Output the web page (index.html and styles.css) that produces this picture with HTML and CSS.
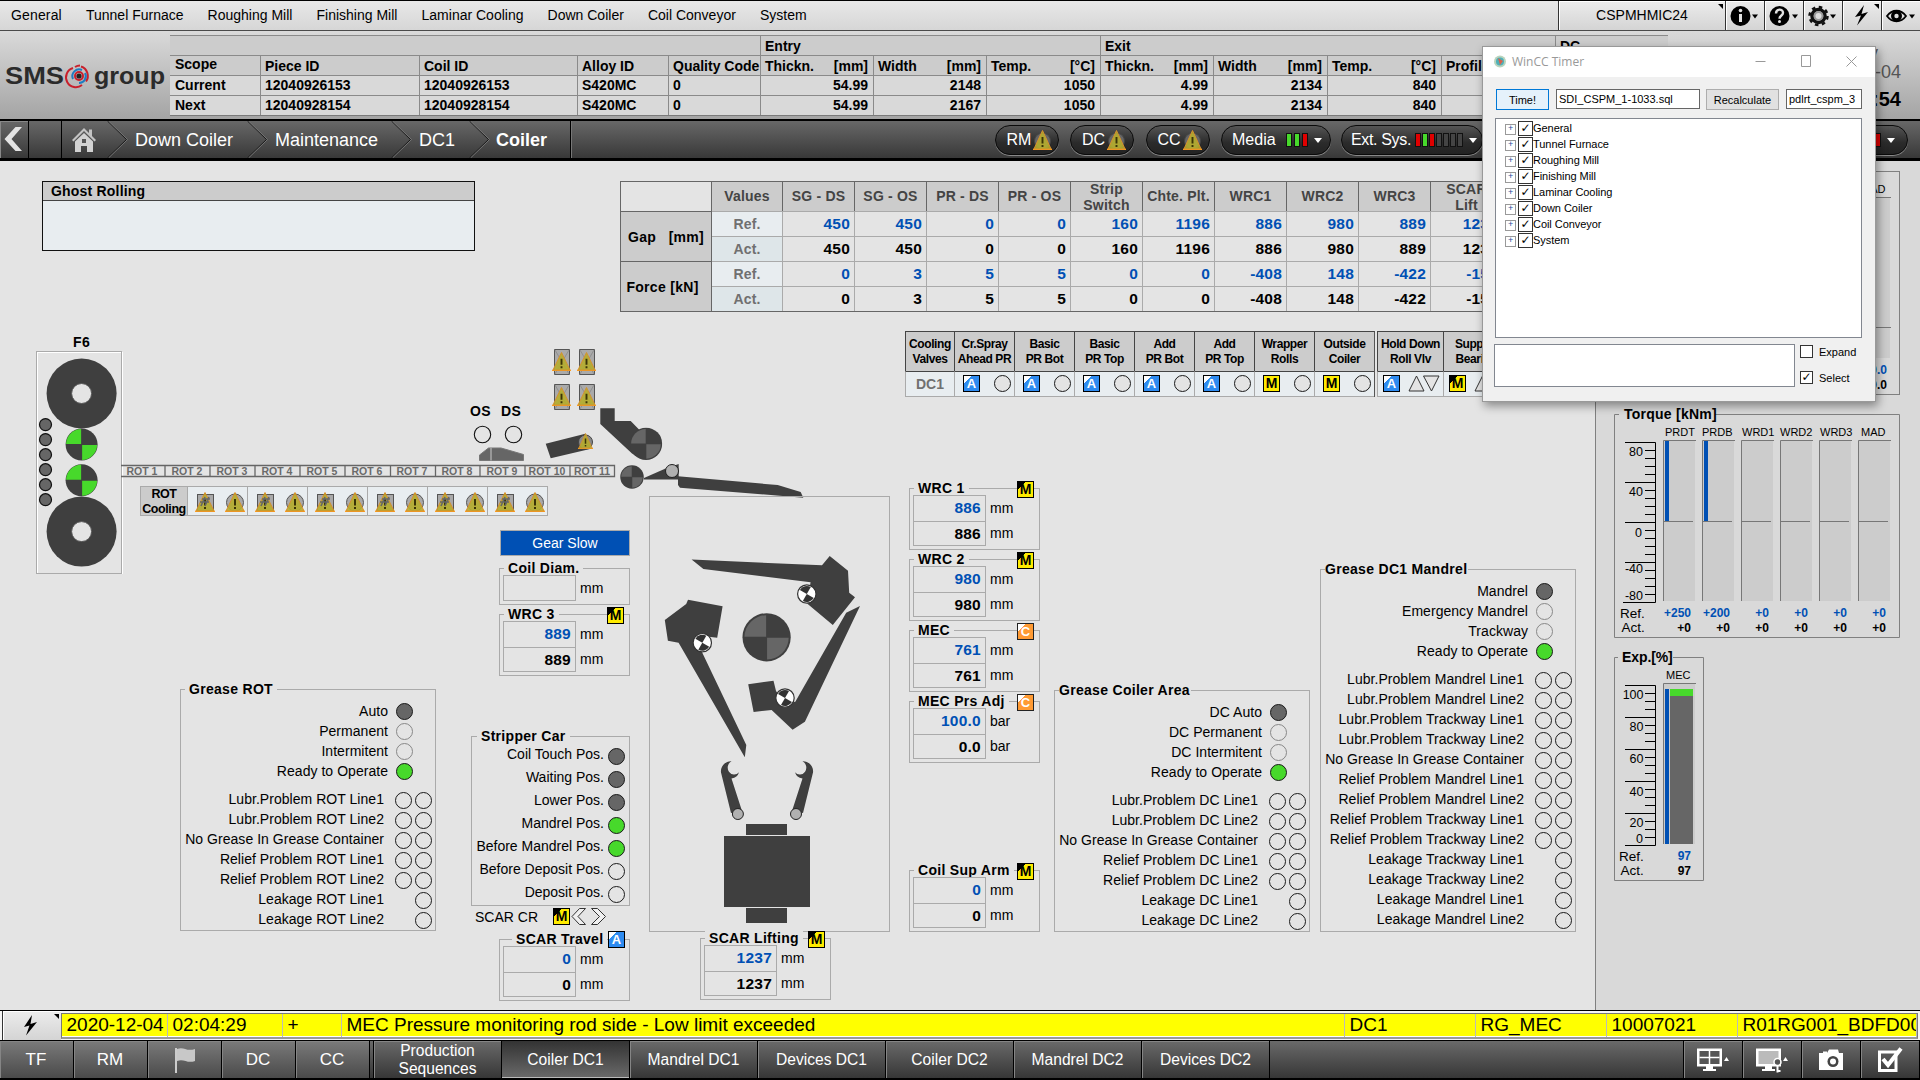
FILE: index.html
```html
<!DOCTYPE html>
<html lang="en">
<head>
<meta charset="utf-8">
<title>Coiler DC1</title>
<link rel="stylesheet" href="styles.css">
</head>
<body>
<svg class="defs" width="0" height="0">
  <symbol id="warn" viewBox="0 0 20 20" preserveAspectRatio="none">
    <path d="M0 19.5H20" stroke="#ff9d1e" stroke-width="1.6"/>
    <path d="M10 .5L19 19H1z" fill="#b5ad2c" fill-opacity=".9" stroke="#d8902c" stroke-width="1"/>
    <path d="M10 7v6.5M10 15v2" stroke="#3a3408" stroke-width="2"/>
  </symbol>
  <symbol id="pivot" viewBox="-10 -10 20 20">
    <circle r="9.2" fill="#fff" stroke="#333" stroke-width="1.2"/>
    <g transform="rotate(30)" fill="#333"><path d="M0 0V-8A8 8 0 0 0-8 0z"/><path d="M0 0V8A8 8 0 0 0 8 0z"/></g>
  </symbol>
  <symbol id="wheel" viewBox="-10 -10 20 20">
    <circle r="9.8" fill="#3f3f3f"/>
    <g fill="#666"><path d="M-.2-.2V-9A9 9 0 0 0-9-.2z"/><path d="M.2.2V9A9 9 0 0 0 9 .2z"/></g>
  </symbol>
  <symbol id="sq" viewBox="0 0 20 22">
    <rect x="2.5" y="4.500" width="16" height="16" fill="#a9a9a9" stroke="#555"/>
    <use href="#warn" x="0" y="2" width="20" height="20"/>
    <path d="M6 16l4-9M10 16l4-9M5 12h9M7 9h8" stroke="#666" stroke-width="1.6"/>
  </symbol>
  <symbol id="rd" viewBox="0 0 20 22">
    <circle cx="10" cy="12.500" r="8.500" fill="#a9a9a9" stroke="#555"/>
    <use href="#warn" x="0" y="2" width="20" height="20"/>
  </symbol>
</svg>

<nav class="menubar">
  <span>General</span><span>Tunnel Furnace</span><span>Roughing Mill</span><span>Finishing Mill</span><span>Laminar Cooling</span><span>Down Coiler</span><span>Coil Conveyor</span><span>System</span>
  <div class="menu-tools">
    <div class="tool station corner">CSPMHMIC24</div>
    <div class="tool"><svg width="38" height="28"><ellipse cx="14.500" cy="14" rx="10" ry="10"/><path d="M14.500 12v8" stroke="#e2e2e2" stroke-width="3"/><circle cx="14.500" cy="8.500" r="1.800" fill="#e2e2e2"/><path d="M26 12.500h6l-3 4z"/></svg></div>
    <div class="tool"><svg width="38" height="28"><circle cx="14.500" cy="14" r="10"/><path d="M11 11.500c0-5 7-5 7-.8 0 3-3.500 2.500-3.500 6" stroke="#e2e2e2" stroke-width="2.400" fill="none"/><circle cx="14.500" cy="19.500" r="1.500" fill="#e2e2e2"/><path d="M27 12.500h6l-3 4z"/></svg></div>
    <div class="tool"><svg width="38" height="28"><circle cx="14.500" cy="14" r="6.500" fill="none" stroke="#111" stroke-width="3.500"/><circle cx="14.500" cy="14" r="9" fill="none" stroke="#111" stroke-width="2.500" stroke-dasharray="3.500 3.570"/><circle cx="14.500" cy="14" r="5" fill="#999"/><circle cx="14.500" cy="14" r="3" fill="#ddd"/><path d="M26 12.500h6l-3 4z"/></svg></div>
    <div class="tool corner"><svg width="38" height="28"><path d="M21 3l-9 12 6-1.500-4 10L25 10l-6.500 2z"/></svg></div>
    <div class="tool"><svg width="38" height="28"><path d="M5 14c5-7 14-7 19 0c-5 7-14 7-19 0z" fill="none" stroke="#000" stroke-width="1.800"/><circle cx="14.500" cy="14" r="5.500"/><circle cx="14.500" cy="14" r="2.200" fill="#ddd"/><path d="M27 12.500h6l-3 4z"/></svg></div>
  </div>
</nav>

<header class="head">
  <svg class="logo" width="170" height="89" viewBox="0 31 170 89">
    <g fill="#2b2b2b"><text x="5" y="83.500" font-size="23" textLength="59" lengthAdjust="spacingAndGlyphs">SMS</text><text x="94" y="83.500" font-size="23" textLength="71" lengthAdjust="spacingAndGlyphs">group</text></g>
    <g fill="none" stroke-width="2">
      <path d="M73 68a9.800 9.800 0 1 0 9 17M81 66.500a9.800 9.800 0 0 1 5 15" stroke="#c8202c"/>
      <path d="M75 67a10 10 0 0 1 5-1.500" stroke="#c8202c"/>
      <path d="M73 79a6.800 6.800 0 0 1 9-9M85 73a6.800 6.800 0 0 1-6 10" stroke="#1f7cc0"/>
      <circle cx="79" cy="76" r="4" stroke="#c8202c"/>
    </g><circle cx="79" cy="76" r="2.600" fill="#222"/>
  </svg>
  <table class="strip">
    <colgroup><col style="width:90px"><col style="width:159px"><col style="width:158px"><col style="width:91px"><col style="width:92px"><col style="width:113px"><col style="width:113px"><col style="width:114px"><col style="width:113px"><col style="width:114px"><col style="width:114px"><col style="width:114px"><col style="width:113px"></colgroup>
    <tr class="top"><th colspan="5"></th><th colspan="3">Entry</th><th colspan="4">Exit</th><th>DC</th></tr>
    <tr class="hd"><th class="sc">Scope</th><th>Piece ID</th><th>Coil ID</th><th>Alloy ID</th><th>Quality Code</th><th><div>Thickn.<span>[mm]</span></div></th><th><div>Width<span>[mm]</span></div></th><th><div>Temp.<span>[°C]</span></div></th><th><div>Thickn.<span>[mm]</span></div></th><th><div>Width<span>[mm]</span></div></th><th><div>Temp.<span>[°C]</span></div></th><th>Profile</th><th></th></tr>
    <tr><td>Current</td><td>12040926153</td><td>12040926153</td><td>S420MC</td><td>0</td><td class="n">54.99</td><td class="n">2148</td><td class="n">1050</td><td class="n">4.99</td><td class="n">2134</td><td class="n">840</td><td></td><td></td></tr>
    <tr><td>Next</td><td>12040928154</td><td>12040928154</td><td>S420MC</td><td>0</td><td class="n">54.99</td><td class="n">2167</td><td class="n">1050</td><td class="n">4.99</td><td class="n">2134</td><td class="n">840</td><td></td><td></td></tr>
  </table>
  <div class="clock"><div class="day">Friday</div><div class="date">2020-12-04</div><div class="time">02:04:54</div></div>
</header>

<nav class="crumbs">
  <div class="back"><svg width="28" height="37"><path d="M22 6L15.500 6L4.500 18L15.500 30H22L11.500 18z" fill="#e4e4e4"/></svg></div>
  <div class="blank"></div>
  <div class="home"><svg width="26" height="26" viewBox="0 0 26 26"><path d="M1 13L13 1l5 5V2.500h3V9l4 4-1.500 1.500L13 4 2.500 14.500z" fill="#c4c4c4"/><path d="M4 14.500L13 6l9 8.500V25h-6v-6h-6v6H4z" fill="#d2d2d2"/><path d="M11 12h4v4h-4z" fill="#555"/></svg></div>
  <svg class="chev" width="21" height="37"><path d="M.5 0L19.500 18.500L.5 37" /><path class="hi" d="M1.500 0L20.500 18.500L1.500 37"/></svg>
  <span style="width:119px">Down Coiler</span>
  <svg class="chev" width="21" height="37"><path d="M.5 0L19.500 18.500L.5 37" /><path class="hi" d="M1.500 0L20.500 18.500L1.500 37"/></svg>
  <span style="width:123px">Maintenance</span>
  <svg class="chev" width="21" height="37"><path d="M.5 0L19.500 18.500L.5 37" /><path class="hi" d="M1.500 0L20.500 18.500L1.500 37"/></svg>
  <span style="width:57px">DC1</span>
  <svg class="chev" width="21" height="37"><path d="M.5 0L19.500 18.500L.5 37" /><path class="hi" d="M1.500 0L20.500 18.500L1.500 37"/></svg>
  <b>Coiler</b>
  <div class="pills">
    <div class="pill area">RM<svg width="19" height="20"><circle cx="9.500" cy="11" r="8" fill="#666" stroke="#444"/><use href="#warn" width="19" height="20"/></svg></div>
    <div class="pill area">DC<svg width="19" height="20"><circle cx="9.500" cy="11" r="8" fill="#666" stroke="#444"/><use href="#warn" width="19" height="20"/></svg></div>
    <div class="pill area">CC<svg width="19" height="20"><circle cx="9.500" cy="11" r="8" fill="#666" stroke="#444"/><use href="#warn" width="19" height="20"/></svg></div>
    <div class="pill media">Media<div class="bars wide"><i class="g"></i><i class="g"></i><i class="r"></i></div><em></em></div>
    <div class="pill ext">Ext. Sys.<div class="bars"><i class="r"></i><i class="g"></i><i class="r"></i><i></i><i></i><i></i><i></i></div><em></em></div>
    <div class="pill last"><div class="bars wide"><i class="r"></i><i class="r"></i></div><em></em></div>
  </div>
</nav>

<main class="main">
  <section class="process">
    <svg class="mimic" width="1595" height="849" viewBox="0 161 1595 849">
      <rect x="36.500" y="352.500" width="85" height="221" fill="none" stroke="#fff" transform="translate(1 0)"/>
      <rect x="36.500" y="351.500" width="85" height="222" fill="none" stroke="#aaa"/>
      <text x="73" y="347" class="lb">F6</text>
      <g fill="#3f3f3f"><circle cx="81.600" cy="393.500" r="35"/><circle cx="81.600" cy="531.600" r="35"/></g>
      <g fill="#e4e4e4" stroke="#555"><circle cx="81.600" cy="393.500" r="10"/><circle cx="81.600" cy="531.600" r="10"/></g>
      <g id="drv" transform="translate(81.600 444.500)"><circle r="16" fill="#3f3f3f"/><g fill="#47d92b"><path d="M-.5-.5V-15.500A15.500 15.500 0 0 0-15.500-.5z"/><path d="M.5.5V15.500A15.500 15.500 0 0 0 15.500.5z"/></g></g>
      <use href="#drv" y="35.800"/>
      <g fill="#666" stroke="#111" stroke-width="1.200"><circle cx="45.500" cy="424.600" r="6"/><circle cx="45.500" cy="439.600" r="6"/><circle cx="45.500" cy="454.700" r="6"/><circle cx="45.500" cy="469.700" r="6"/><circle cx="45.500" cy="484.700" r="6"/><circle cx="45.500" cy="499.700" r="6"/></g>
      <path d="M121 465.500H614.500V476.500H121M165 465v12M210 465v12M255 465v12M300 465v12M345 465v12M390.500 465v12M435.500 465v12M480 465v12M525 465v12M570 465v12" fill="none" stroke="#666" stroke-width="1.300"/>
      <g class="rot"><text x="142" y="475">ROT 1</text><text x="187" y="475">ROT 2</text><text x="232" y="475">ROT 3</text><text x="277" y="475">ROT 4</text><text x="322" y="475">ROT 5</text><text x="367" y="475">ROT 6</text><text x="412" y="475">ROT 7</text><text x="457" y="475">ROT 8</text><text x="502" y="475">ROT 9</text><text x="547" y="475">ROT 10</text><text x="592" y="475">ROT 11</text></g>
      <text x="470" y="416" class="lb">OS</text><text x="501" y="416" class="lb">DS</text>
      <g fill="none" stroke="#111" stroke-width="1.100"><circle cx="482.500" cy="434.500" r="8.200"/><circle cx="513.500" cy="434.500" r="8.200"/></g>
      <path d="M479.500 460.500V455L488.500 448H501L523.500 454.500V460.500z" fill="#666" stroke="#777"/><path d="M491 448v12.500" stroke="#aaa" stroke-width="1.500"/>
      <g fill="#aaa" stroke="#555"><path d="M554.500 349.500h15v25h-15zM579.500 349.500h15v25h-15zM554.500 384.500h15v25h-15zM579.500 384.500h15v25h-15z"/></g>
      <path d="M555 350l14 24m0-24l-14 24M580 350l14 24m0-24l-14 24M555 385l14 24m0-24l-14 24M580 385l14 24m0-24l-14 24" stroke="#888" fill="none" stroke-width=".8"/>
      <use href="#warn" x="552" y="352" width="19" height="19"/><use href="#warn" x="577" y="352" width="19" height="19"/><use href="#warn" x="552" y="387" width="19" height="19"/><use href="#warn" x="577" y="387" width="19" height="19"/>
      <g fill="#3f3f3f">
        <path d="M545.700 443.700L585.300 433.700L590 449L550.700 458.300z"/>
        <path d="M600.300 408.300H614.700V421H630.700L640 430.500L648 445L636 456L632 453.500L600.300 424z"/>
        <path d="M644 478L665 468.700L678.700 464V479.500H644z"/>
        <path d="M678 476.300L777.700 485L800.700 492L803.300 497.700L680 487.700L678 485z"/>
      </g>
      <circle cx="585.500" cy="442" r="7" fill="#888" stroke="#444"/><use href="#warn" x="578" y="433" width="15" height="16"/>
      <use href="#wheel" x="629.500" y="427.300" width="33" height="33"/>
      <use href="#wheel" x="620" y="465" width="24" height="24"/>
      <circle cx="672" cy="471" r="6.500" fill="#b0b0b0" stroke="#222"/>
      <rect x="649.500" y="496.500" width="240" height="435" fill="none" stroke="#aaa"/>
      <g fill="#3f3f3f">
        <path d="M691.600 559.500L822 565.300L829.700 556L848 570.700L849.200 592.700L855 597.300L832.800 625L806.800 603.300L810.600 582.300L703.400 569z"/>
        <path d="M688 599.700L722.600 606.300L717.200 637.700L702.300 636V652.700L746.300 745L744.800 757.300L678.600 642.700L667.900 640.700L664.800 620L686.200 604z"/>
        <path d="M860 606L846.200 612.700L795.300 701.700L785 704L776 691L773.500 680.700L748.200 684.300L753.600 712L771.600 710L792.600 729.700L804.900 721.700z"/>
        <g id="hook"><path d="M731.500 761.200A10 10 0 0 0 721 772.500L731 813L742 811L731.500 778.500Q737.500 777.500 739 772.300A6.500 7 0 1 1 731.500 761.200z"/></g>
        <use href="#hook" transform="translate(1534 0) scale(-1 1)"/>
        <path d="M746 824h41v11h-41zM724 836h86v71h-86zM746 908h41v15h-41z"/>
      </g>
      <g fill="#b0b0b0" stroke="#222"><circle cx="737.900" cy="814" r="5.500"/><circle cx="796" cy="814" r="5.500"/></g>
      <use href="#pivot" x="796.800" y="584" width="20" height="20"/><use href="#pivot" x="692.300" y="632.700" width="20" height="20"/><use href="#pivot" x="775" y="688" width="20" height="20"/>
      <use href="#wheel" x="742" y="612.700" width="49.200" height="49.200"/>
    </svg>

    <div class="toprow">
      <div class="ghost"><h3>Ghost Rolling</h3></div>
      <table class="values">
        <tr class="vh"><th class="none"></th><th class="v">Values</th><th>SG - DS</th><th>SG - OS</th><th>PR - DS</th><th>PR - OS</th><th><div>Strip<br>Switch</div></th><th>Chte. Plt.</th><th>WRC1</th><th>WRC2</th><th>WRC3</th><th><div>SCAR<br>Lift</div></th><th></th><th></th></tr>
        <tr class="ref"><th rowspan="2" class="rh">Gap &nbsp;&nbsp;[mm]</th><td class="k">Ref.</td><td>450</td><td>450</td><td>0</td><td>0</td><td>160</td><td>1196</td><td>886</td><td>980</td><td>889</td><td>1237</td><td></td><td></td></tr>
        <tr><td class="k">Act.</td><td>450</td><td>450</td><td>0</td><td>0</td><td>160</td><td>1196</td><td>886</td><td>980</td><td>889</td><td>1237</td><td></td><td></td></tr>
        <tr class="ref"><th rowspan="2" class="rh f2">Force [kN]</th><td class="k">Ref.</td><td>0</td><td>3</td><td>5</td><td>5</td><td>0</td><td>0</td><td>-408</td><td>148</td><td>-422</td><td>-159</td><td></td><td></td></tr>
        <tr class="lastrow"><td class="k">Act.</td><td>0</td><td>3</td><td>5</td><td>5</td><td>0</td><td>0</td><td>-408</td><td>148</td><td>-422</td><td>-159</td><td></td><td></td></tr>
      </table>
    </div>

    <div class="valves">
      <div class="vc first"><b>Cooling<br>Valves</b><div>DC1</div></div>
      <div class="vc"><b>Cr.Spray<br>Ahead PR</b><div><i class="bd a">A</i><i class="lamp lf"></i></div></div>
      <div class="vc"><b>Basic<br>PR Bot</b><div><i class="bd a">A</i><i class="lamp lf"></i></div></div>
      <div class="vc"><b>Basic<br>PR Top</b><div><i class="bd a">A</i><i class="lamp lf"></i></div></div>
      <div class="vc"><b>Add<br>PR Bot</b><div><i class="bd a">A</i><i class="lamp lf"></i></div></div>
      <div class="vc"><b>Add<br>PR Top</b><div><i class="bd a">A</i><i class="lamp lf"></i></div></div>
      <div class="vc"><b>Wrapper<br>Rolls</b><div><i class="bd m plain">M</i><i class="lamp lf"></i></div></div>
      <div class="vc end"><b>Outside<br>Coiler</b><div><i class="bd m plain">M</i><i class="lamp lf"></i></div></div>
      <div class="vc tri"><b>Hold Down<br>Roll Vlv</b><div><i class="bd a">A</i><svg width="32" height="17"><path d="M1 16L8.500 1L16 16zM15.500 1H31L23.500 16z" fill="#e4e4e4" stroke="#333"/></svg></div></div>
      <div class="vc tri"><b>Support<br>Bearing</b><div><i class="bd m">M</i><svg width="32" height="17"><path d="M1 16L8.500 1L16 16zM15.500 1H31L23.500 16z" fill="#e4e4e4" stroke="#333"/></svg></div></div>
    </div>

    <div class="board">
      <div class="c1">
        <div class="rotcool"><b>ROT<br>Cooling</b>
          <div><svg width="20" height="22"><use href="#sq"/></svg><svg width="20" height="22"><use href="#rd"/></svg></div>
          <div><svg width="20" height="22"><use href="#sq"/></svg><svg width="20" height="22"><use href="#rd"/></svg></div>
          <div><svg width="20" height="22"><use href="#sq"/></svg><svg width="20" height="22"><use href="#rd"/></svg></div>
          <div><svg width="20" height="22"><use href="#sq"/></svg><svg width="20" height="22"><use href="#rd"/></svg></div>
          <div><svg width="20" height="22"><use href="#sq"/></svg><svg width="20" height="22"><use href="#rd"/></svg></div>
          <div><svg width="20" height="22"><use href="#sq"/></svg><svg width="20" height="22"><use href="#rd"/></svg></div>
        </div>
        <div class="box grease g-rot"><h4>Grease ROT</h4>
          <ul class="st"><li>Auto<i class="lamp dk"></i></li><li>Permanent<i class="lamp off"></i></li><li>Intermitent<i class="lamp off"></i></li><li>Ready to Operate<i class="lamp gn"></i></li></ul>
          <ul class="pb"><li>Lubr.Problem ROT Line1<i class="lamp"></i><i class="lamp"></i></li><li>Lubr.Problem ROT Line2<i class="lamp"></i><i class="lamp"></i></li><li>No Grease In Grease Container<i class="lamp"></i><i class="lamp"></i></li><li>Relief Problem ROT Line1<i class="lamp"></i><i class="lamp"></i></li><li>Relief Problem ROT Line2<i class="lamp"></i><i class="lamp"></i></li><li>Leakage ROT Line1<i class="lamp one"></i></li><li>Leakage ROT Line2<i class="lamp one"></i></li></ul>
        </div>
      </div>
      <div class="c2">
        <div class="gear">Gear Slow</div>
        <div class="box val single"><h4>Coil Diam.</h4><div class="vr"><div class="f"><p></p></div><div class="u"><p>mm</p></div></div></div>
        <div class="box val"><h4>WRC 3</h4><i class="bd m">M</i><div class="vr"><div class="f"><p class="bl">889</p><p>889</p></div><div class="u"><p>mm</p><p>mm</p></div></div></div>
        <div class="box stripper"><h4>Stripper Car</h4>
          <ul><li>Coil Touch Pos.<i class="lamp dk"></i></li><li>Waiting Pos.<i class="lamp dk"></i></li><li>Lower Pos.<i class="lamp dk"></i></li><li>Mandrel Pos.<i class="lamp gn"></i></li><li>Before Mandrel Pos.<i class="lamp gn"></i></li><li>Before Deposit Pos.<i class="lamp"></i></li><li>Deposit Pos.<i class="lamp"></i></li></ul>
        </div>
        <div class="scarcr"><span>SCAR CR</span><i class="bd m">M</i><svg width="38" height="17"><path d="M9.500.5h6L8 8.500l7.500 8h-6L2 8.500zM21.500.5h6l8 8-8 8h-6l8-8z" fill="#f0f0f0" stroke="#333"/></svg></div>
        <div class="box val travel"><h4>SCAR Travel</h4><i class="bd a">A</i><div class="vr"><div class="f"><p class="bl">0</p><p>0</p></div><div class="u"><p>mm</p><p>mm</p></div></div></div>
      </div>
      <div class="c3">
        <div class="box val"><h4>SCAR Lifting</h4><i class="bd m">M</i><div class="vr"><div class="f"><p class="bl">1237</p><p>1237</p></div><div class="u"><p>mm</p><p>mm</p></div></div></div>
      </div>
      <div class="c4">
        <div class="box val"><h4>WRC 1</h4><i class="bd m">M</i><div class="vr"><div class="f"><p class="bl">886</p><p>886</p></div><div class="u"><p>mm</p><p>mm</p></div></div></div>
        <div class="box val"><h4>WRC 2</h4><i class="bd m">M</i><div class="vr"><div class="f"><p class="bl">980</p><p>980</p></div><div class="u"><p>mm</p><p>mm</p></div></div></div>
        <div class="box val"><h4>MEC</h4><i class="bd c">C</i><div class="vr"><div class="f"><p class="bl">761</p><p>761</p></div><div class="u"><p>mm</p><p>mm</p></div></div></div>
        <div class="box val"><h4>MEC Prs Adj</h4><i class="bd c">C</i><div class="vr"><div class="f"><p class="bl">100.0</p><p>0.0</p></div><div class="u"><p>bar</p><p>bar</p></div></div></div>
        <div class="box val arm"><h4>Coil Sup Arm</h4><i class="bd m">M</i><div class="vr"><div class="f"><p class="bl">0</p><p>0</p></div><div class="u"><p>mm</p><p>mm</p></div></div></div>
      </div>
      <div class="c5">
        <div class="box grease"><h4>Grease Coiler Area</h4>
          <ul class="st"><li>DC Auto<i class="lamp dk"></i></li><li>DC Permanent<i class="lamp off"></i></li><li>DC Intermitent<i class="lamp off"></i></li><li>Ready to Operate<i class="lamp gn"></i></li></ul>
          <ul class="pb"><li>Lubr.Problem DC Line1<i class="lamp"></i><i class="lamp"></i></li><li>Lubr.Problem DC Line2<i class="lamp"></i><i class="lamp"></i></li><li>No Grease In Grease Container<i class="lamp"></i><i class="lamp"></i></li><li>Relief Problem DC Line1<i class="lamp"></i><i class="lamp"></i></li><li>Relief Problem DC Line2<i class="lamp"></i><i class="lamp"></i></li><li>Leakage DC Line1<i class="lamp one"></i></li><li>Leakage DC Line2<i class="lamp one"></i></li></ul>
        </div>
      </div>
      <div class="c6">
        <div class="box grease tall"><h4>Grease DC1 Mandrel</h4>
          <ul class="st"><li>Mandrel<i class="lamp dk"></i></li><li>Emergency Mandrel<i class="lamp off"></i></li><li>Trackway<i class="lamp off"></i></li><li>Ready to Operate<i class="lamp gn"></i></li></ul>
          <ul class="pb"><li>Lubr.Problem Mandrel Line1<i class="lamp"></i><i class="lamp"></i></li><li>Lubr.Problem Mandrel Line2<i class="lamp"></i><i class="lamp"></i></li><li>Lubr.Problem Trackway Line1<i class="lamp"></i><i class="lamp"></i></li><li>Lubr.Problem Trackway Line2<i class="lamp"></i><i class="lamp"></i></li><li>No Grease In Grease Container<i class="lamp"></i><i class="lamp"></i></li><li>Relief Problem Mandrel Line1<i class="lamp"></i><i class="lamp"></i></li><li>Relief Problem Mandrel Line2<i class="lamp"></i><i class="lamp"></i></li><li>Relief Problem Trackway Line1<i class="lamp"></i><i class="lamp"></i></li><li>Relief Problem Trackway Line2<i class="lamp"></i><i class="lamp"></i></li><li>Leakage Trackway Line1<i class="lamp one"></i></li><li>Leakage Trackway Line2<i class="lamp one"></i></li><li>Leakage Mandrel Line1<i class="lamp one"></i></li><li>Leakage Mandrel Line2<i class="lamp one"></i></li></ul>
        </div>
      </div>
    </div>
  </section>

  <aside class="side">
    <svg class="chart" width="287" height="224" viewBox="0 0 287 224">
      <rect x=".5" y=".5" width="285" height="223" fill="none" stroke="#808080"/>
      <text x="247" y="22" class="cl">MAD</text><path d="M244 26h32v161h-32z" fill="#ccc"/><path d="M244.500 187V26.500H277M244 156.500h33" fill="none" stroke="#777"/>
      <text x="273" y="203" class="cv bl">0.0</text><text x="273" y="218" class="cv">0.0</text>
    </svg>
    <svg class="chart" width="287" height="232" viewBox="0 0 287 232">
      <path d="M5 8.500H.5V231.500H285.500V8.500H101" fill="none" stroke="#808080"/>
      <text x="10" y="13" class="ct">Torque [kNm]</text>
      <g class="cl"><text x="51" y="30">PRDT</text><text x="88" y="30">PRDB</text><text x="128" y="30">WRD1</text><text x="166" y="30">WRD2</text><text x="206" y="30">WRD3</text><text x="247" y="30">MAD</text></g>
      <path d="M49 35h32v160H49zM88 35h32v160H88zM127 35h32v160h-32zM166 35h32v160h-32zM205 35h32v160h-32zM244 35h32v160h-32z" fill="#ccc"/>
      <path d="M49.500 195V34.500H82M88.500 195V34.500H121M127.500 195V34.500H160M166.500 195V34.500H199M205.500 195V34.500H238M244.500 195V34.500H277M50 115.500h29M89 115.500h29M128 115.500h29M167 115.500h29M206 115.500h29M245 115.500h29" fill="none" stroke="#777"/>
      <path d="M51 35h4v80h-4zM90 35h4v80h-4z" fill="#0050b4"/>
      <path d="M11 36.500H41.500V196.500H9M11 76.500H41M11 116.500H41M11 156.500H41M31 44.500h10M31 52.500h10M31 60.500h10M31 68.500h10M31 84.500h10M31 92.500h10M31 100.500h10M31 108.500h10M31 124.500h10M31 132.500h10M31 140.500h10M31 148.500h10M31 164.500h10M31 172.500h10M31 180.500h10M31 188.500h10" fill="none" stroke="#000"/>
      <g class="ax"><text x="29" y="50">80</text><text x="29" y="90">40</text><text x="28" y="131">0</text><text x="29" y="167">-40</text><text x="29" y="194">-80</text></g>
      <g class="cr"><text x="6" y="212">Ref.</text><text x="7.500" y="226">Act.</text></g>
      <g class="cv bl"><text x="77" y="211">+250</text><text x="116" y="211">+200</text><text x="155" y="211">+0</text><text x="194" y="211">+0</text><text x="233" y="211">+0</text><text x="272" y="211">+0</text></g>
      <g class="cv"><text x="77" y="226">+0</text><text x="116" y="226">+0</text><text x="155" y="226">+0</text><text x="194" y="226">+0</text><text x="233" y="226">+0</text><text x="272" y="226">+0</text></g>
    </svg>
    <svg class="chart exp" width="91" height="232" viewBox="0 0 91 232">
      <path d="M4 8.500H.5V231.500H89.500V8.500H59" fill="none" stroke="#808080"/>
      <text x="8" y="13" class="ct" textLength="51">Exp.[%]</text>
      <text x="52" y="30" class="cl">MEC</text>
      <path d="M49 35h32v160H49z" fill="#ccc"/><path d="M49.500 195V34.500H82" fill="none" stroke="#777"/>
      <path d="M51 40h4v155h-4z" fill="#0050b4"/><path d="M56 40h23v7H56z" fill="#47d92b"/><path d="M56 47h23v148H56z" fill="#666"/>
      <path d="M11 36.500H41.500V196.500H11M11 68.500H41M11 100.500H41M11 132.500H41M11 164.500H41M31 44.500h10M31 52.500h10M31 60.500h10M31 76.500h10M31 84.500h10M31 92.500h10M31 108.500h10M31 116.500h10M31 124.500h10M31 140.500h10M31 148.500h10M31 156.500h10M31 172.500h10M31 180.500h10M31 188.500h10" fill="none" stroke="#000"/>
      <g class="ax"><text x="29.500" y="50">100</text><text x="29.500" y="82">80</text><text x="29.500" y="114">60</text><text x="29.500" y="147">40</text><text x="29.500" y="178">20</text><text x="29" y="194">0</text></g>
      <g class="cr"><text x="5" y="212">Ref.</text><text x="6.500" y="226">Act.</text></g>
      <text x="77" y="211" class="cv bl">97</text><text x="77" y="226" class="cv">97</text>
    </svg>
  </aside>
</main>

<section class="alarm">
  <div class="tool corner"><svg width="58" height="28"><path d="M30 3l-8 12 5.500-1.500-3.500 10L35 10l-6.500 2z"/></svg></div>
  <div class="alarmrow"><span style="width:106px">2020-12-04</span><span style="width:115px">02:04:29</span><span style="width:59px">+</span><span style="width:1003px">MEC Pressure monitoring rod side - Low limit exceeded</span><span style="width:131px">DC1</span><span style="width:131px">RG_MEC</span><span style="width:131px">10007021</span><span class="fill">R01RG001_BDFD001</span></div>
</section>

<footer class="tabs">
  <div class="t a">TF</div><div class="t a">RM</div><div class="t a"><svg width="24" height="28"><path d="M4 2v25" stroke="#ccc" stroke-width="2"/><path d="M5 3c7-3 9 3 18 0v12c-8 3-11-3-18 0z" fill="#c8c8c8"/></svg></div><div class="t a">DC</div><div class="t a">CC</div>
  <div class="gapcell"></div>
  <div class="t p two">Production Sequences</div><div class="t p on">Coiler DC1</div><div class="t p">Mandrel DC1</div><div class="t p">Devices DC1</div><div class="t p">Coiler DC2</div><div class="t p">Mandrel DC2</div><div class="t p">Devices DC2</div>
  <div class="grow"></div>
  <div class="t i"><svg width="34" height="26"><path d="M1 1.500h25v18H1z" fill="#fff"/><path d="M3.500 4h20v13h-20z" fill="#555"/><path d="M3.500 10.500h20M13.500 4v13" stroke="#fff" stroke-width="1.500"/><path d="M10 19h7v3h3v2H7v-2h3z" fill="#fff"/><path d="M28 14h5l-2.500-4z" fill="#fff"/></svg></div>
  <div class="t i"><svg width="34" height="26"><path d="M1 1.500h25v18H1z" fill="#fff"/><path d="M3.500 4h20v13h-20z" fill="#bbb"/><path d="M10 19h7v3h3v2H7v-2h3z" fill="#fff"/><circle cx="22.500" cy="15" r="3.500" fill="#555" stroke="#fff" stroke-width="1.500"/><path d="M22.500 18.500v7M22.500 24h3" stroke="#fff" stroke-width="2"/><path d="M28 14h5l-2.500-4z" fill="#fff"/></svg></div>
  <div class="t i"><svg width="26" height="22"><path d="M1 4h4V2.500h4V4l2-3.500h9L21 4h4v17H1z" fill="#fff"/><circle cx="15" cy="12.500" r="5.500" fill="#444"/><circle cx="15" cy="12.500" r="3" fill="#fff"/></svg></div>
  <div class="t i"><svg width="26" height="26"><path d="M2.500 5h16.500v18.500H2.500z" fill="none" stroke="#fff" stroke-width="3"/><path d="M6 12l5 6L24 1.500" fill="none" stroke="#fff" stroke-width="4"/></svg></div>
</footer>

<div class="win">
  <div class="wtitle"><svg width="14" height="14"><circle cx="7" cy="7.500" r="6" fill="#b9d4bd"/><circle cx="7" cy="7.500" r="4" fill="#4fb0b8"/><path d="M5 4l5 3-3 4z" fill="#d9624d"/></svg><span>WinCC Timer</span>
    <svg class="wbtn" width="110" height="14"><path d="M.5 7.500h10M46.500 1.500h9v11h-9zM91.500 2.500l10 10M101.500 2.500l-10 10" fill="none" stroke="#999"/></svg></div>
  <div class="wrow"><div class="btn pri">Time!</div><div class="inp w1">SDI_CSPM_1-1033.sql</div><div class="btn">Recalculate</div><div class="inp w2">pdlrt_cspm_3</div></div>
  <ul class="tree"><li>General</li><li>Tunnel Furnace</li><li>Roughing Mill</li><li>Finishing Mill</li><li>Laminar Cooling</li><li>Down Coiler</li><li>Coil Conveyor</li><li>System</li></ul>
  <div class="wfoot"><div class="memo"></div><div class="opts"><div><i class="ck"></i>Expand</div><div><i class="ck on"></i>Select</div></div></div>
</div>
</body>
</html>
```
FILE: styles.css
```css
*{box-sizing:border-box}
body{margin:0;width:1920px;height:1080px;overflow:hidden;position:relative;background:#e4e4e4;font:14px "Liberation Sans",Arial,sans-serif;color:#000}
h3,h4,p,ul{margin:0;padding:0;font-size:inherit}
ul{list-style:none}
i,em{font-style:normal}
svg{display:block;flex:none}
.defs{position:absolute}
.bl{color:#0050b4}

/* menu bar */
.menubar{height:31px;border-top:1px solid #000;border-bottom:1px solid #4a4a4a;background:linear-gradient(#e8e8e8,#d6d6d6);display:flex;align-items:center;gap:24.1px;padding-left:11px;white-space:nowrap;line-height:16px}
.menubar>span{padding-bottom:2px}
.menubar>span:first-child{letter-spacing:.15px}
.menu-tools{margin-left:auto;display:flex;align-self:stretch}
.tool{width:39px;border-left:1px solid #333;background:linear-gradient(#ececec,#d4d4d4);box-shadow:inset 1px 1px #fff;display:flex;align-items:center;justify-content:center;position:relative}
.station{width:167px;padding-bottom:1px}
.corner::after{content:"";position:absolute;right:2px;top:3px;border-top:5px solid #000;border-left:5px solid transparent}

/* product strip */
.head{height:89px;display:flex;background:linear-gradient(#dadada,#a4a4a4);border-bottom:1px solid #000;position:relative}
.logo{font-weight:bold}
.strip{margin-top:4px;height:80px;width:1498px;flex:none;table-layout:fixed;border-spacing:0;font-weight:bold;border-bottom:1px solid #7a7a7a;background:#d9d9d9}
.strip th,.strip td{padding:0 5px 1px 4px;border-top:1px solid #8a8a8a;border-left:1px solid #8a8a8a;height:20px;line-height:18px;text-align:left;overflow:hidden;white-space:nowrap}
.strip tr>:first-child{border-left:0;padding-left:5px}
.strip .top th,.strip .hd th{background:#ccc;line-height:17px;vertical-align:bottom;padding-bottom:0}
.strip .hd .sc{line-height:17px;vertical-align:top}
.strip th div{display:flex;justify-content:space-between}
.strip .n{text-align:right}
.clock{margin-left:auto;width:120px;padding-right:19px;text-align:right;color:#555;line-height:24px;font-size:18px;padding-top:10px}
.day{padding-right:23px}
.date{margin-top:-5px}
.time{font:bold 20px/26px "Liberation Sans",sans-serif;color:#000;margin-top:2px}

/* breadcrumbs */
.crumbs{height:41px;background:linear-gradient(#686868,#383838);border-top:1px solid #000;border-bottom:3px solid #000;display:flex;align-items:stretch;color:#fff;font-size:18px;line-height:38px;white-space:nowrap}
.back{width:29px;border-right:1px solid #000;box-shadow:inset 1px 1px #888}
.blank{width:33px;border-right:1px solid #000}
.home{width:45px;padding:6px 0 0 9px}
.chev{fill:none;stroke:#111}
.chev .hi{stroke:#777}
.crumbs>span{padding-left:7px}
.crumbs b{width:81px;padding-left:6px;border-right:1px solid #000;box-shadow:1px 0 #777}
.pills{margin-left:auto;display:flex;padding:4px 12px 0 0}
.pill{height:30px;border:1px solid #0a0a0a;border-radius:15px;background:linear-gradient(#555,#2b2b2b 60%,#222);box-shadow:0 1px #888;display:flex;align-items:center;font-size:16px;line-height:26px}
.area{width:64px;margin-right:11.500px;padding-left:11px;gap:2px}
.media{width:110px;padding-left:10px;margin-right:10px}
.ext{width:142px;padding-left:9px;letter-spacing:-.35px}
.last{width:110px;justify-content:flex-end;margin-left:315px;padding-right:12px}
.last em{margin-left:7px}
.bars{display:flex;margin-left:4px;gap:1px}
.bars i{width:6px;height:14px;border:1px solid #111;background:#444}
.bars .g{background:#47d92b}.bars .r{background:#e00000}
.bars.wide{gap:2px;margin-left:10px}
.pill em{border:4px solid transparent;border-top:5px solid #fff;border-bottom:0;margin-left:6px}

/* main process picture */
.main{display:flex;height:849px}
.process{width:1595px;position:relative;overflow:hidden}
.mimic{position:absolute;left:0;top:0}
.lb{font-weight:bold;font-size:14px;letter-spacing:.4px}
.rot{font-size:10.500px;font-weight:bold;fill:#6a6a6a;text-anchor:middle}
.toprow{display:flex;justify-content:space-between;padding:20px 0 0 42px;position:relative;height:151px;width:1647px}
.ghost{width:433px;height:70px;border:1px solid #111;background:#e8edf0}
.ghost h3{height:19px;background:#ccc;border-bottom:1px solid #444;padding-left:8px;line-height:18px;letter-spacing:.2px}
.values{width:1027px;height:131px;table-layout:fixed;border-spacing:0;font-weight:bold;border-bottom:1px solid #666;border-left:1px solid #666}
.values th,.values td{border-top:1px solid #aaa;border-right:1px solid #aaa;padding:0;height:25px}
.values td{text-align:right;padding-right:4px;font-size:15.500px;letter-spacing:.2px;line-height:20px}
.values tr.vh th{height:30px;width:72px;background:#ccc;color:#444;border-color:#666;line-height:16px;font-size:14px;letter-spacing:.2px;padding-bottom:1px}
.vh div{height:28px;margin-top:-3px}
.values tr.vh .none{width:91px;background:none}
.values tr.vh .v{width:71px}
.values .rh{background:#ccc;border-color:#666;font-size:14px;letter-spacing:.3px}
.values .f2{padding-right:7px}
.values .k,.values .ref .k{text-align:center;color:#707070;background:#dee6e9;font-size:14px;padding:0}
.values .ref .k{background:#e8edf0}
.values .ref td{color:#0050b4}
.valves{display:flex;margin:19px 0 0 905px;height:66px;position:relative;width:800px}
.vc{width:60px;border-top:1px solid #444}
.vc b{display:block;height:39px;background:#ccc;border-left:1px solid #444;font-size:12px;letter-spacing:-.4px;line-height:15px;padding-top:5px;text-align:center;white-space:nowrap}
.vc>div{height:26px;background:#e8edf0;border:1px solid #aaa;border-top-color:#444;border-right:0;display:flex;align-items:center;justify-content:space-between;padding:0 3px 1px 8px}
.vc.first{width:49px}.vc.first>div{justify-content:center;padding:0;font-weight:bold;color:#707070}
.vc.end{width:61px;margin-right:2px;border-right:1px solid #555}
.vc.tri{width:66px}.vc.tri>div{padding:0 3px 1px 5px}

.lamp{width:17px;height:17px;border-radius:50%;border:1px solid #1a1a1a;flex:none}
.lamp.dk{background:#666}.lamp.gn{background:#47d92b}.lamp.off{border-color:#888}.lamp.lf{background:#e4e4e4}
.bd{width:17px;height:17px;border:1px solid #000;font:bold 14px/15px "Liberation Sans",sans-serif;text-align:center;flex:none;letter-spacing:0}
.bd.m{background:linear-gradient(135deg,#000 25%,#ffeb00 26%);color:#000}
.bd.m.plain{background:#ffeb00}
.bd.a{background:linear-gradient(135deg,#fff 25%,#2e8bf0 26%);color:#fff;font-size:13px}
.bd.c{background:linear-gradient(135deg,#fff 25%,#ff9a33 26%);color:#fff;font-size:13px;border-color:#222}

.board{display:grid;grid-template-columns:471px 229px 209px 145px 266px 1fr;position:relative}
.rotcool{display:flex;width:408px;height:30px;margin:89px 0 0 140px;border:1px solid #aaa}
.rotcool b{width:46px;flex:none;background:#ccc;font-size:12.500px;line-height:15px;text-align:center;letter-spacing:-.4px}
.rotcool div{width:60px;background:#e8edf0;border-left:1px solid #aaa;display:flex;gap:10px;padding:3px 0 0 7px;flex:none}
.box{border:1px solid #aaa}
.box h4{width:max-content;height:15px;line-height:15px;margin:-8px 0 0 4px;padding:0 4px;background:#e4e4e4;letter-spacing:.3px}
.grease{width:256px;height:242px;letter-spacing:.04px}
.grease.tall{height:363px}
.grease h4{padding:0 1px 0 0}
.g-rot{margin:173px 0 0 180px}
.g-rot h4{padding:0 4px}
.st{padding:5px 22px 0 0}
.st li{display:flex;justify-content:flex-end;height:20px;gap:8px;line-height:18px}
.pb{padding:9px 3px 0 0}
.pb li{display:flex;justify-content:flex-end;gap:3px;height:20px;line-height:17px}
.st .lamp,.pb .lamp{margin-top:1px}
.pb .lamp:first-of-type{margin-left:8px}
.pb .one:first-of-type{margin-left:28px}
.c2 .gear{margin:133px 0 12px 29px;width:130px;height:26px;background:#0050b4;border:1px solid #aaa;color:#fff;text-align:center;line-height:24px}
.val{width:131px;height:62px;position:relative}
.val h4{height:14px}
.val.single{height:37px;margin-bottom:9px}
.c2 .val{margin-left:28px}
.val .bd{position:absolute;right:5px;top:-8px}
.travel .bd{right:4px;top:-9px}
.vr{display:flex;margin-left:3px}
.f{width:73px;border:1px solid #aaa;font-weight:bold;font-size:15.500px;letter-spacing:.25px;text-align:right}
.f p{height:25px;line-height:24px;padding-right:4px}
.single .f{height:26px}
.f p+p{border-top:1px solid #aaa;height:24px}
.u{padding-left:4px}
.u p{height:25px;line-height:27px}
.stripper{width:159px;height:170px;margin-top:60px}
.stripper h4{margin-left:5px}
.stripper ul{padding:0 4px 0 0}
.stripper li{display:flex;justify-content:flex-end;gap:4px;height:23px;line-height:20px;white-space:nowrap}
.stripper .lamp{margin-top:4px}
.scarcr{display:flex;height:17px;margin:2px 0 14px 4px;line-height:18px}
.scarcr span{width:78px}
.travel h4{margin-left:12px}
.c3{padding-top:541px}
.c4{padding-top:91px;display:flex;flex-direction:column;gap:9px}
.arm{margin-top:98px}
.c5{padding-top:293px}.c6{padding-top:172px}

/* side charts */
.side{width:325px;border-left:1px solid #808080;background:#d9d9d9;padding:10px 0 0 18px}
.chart{margin-bottom:11px}
.ct{font-weight:bold;letter-spacing:.25px}
.cl{font-size:11px}
.ax{font-size:12.500px;text-anchor:end}
.cr{font-size:13.500px}
.cv{font-size:12px;font-weight:bold;text-anchor:end}
.cv.bl{fill:#0050b4}

/* alarm line */
.alarm{height:30px;border-top:1px solid #000;background:#f4f4f4;display:flex;padding-left:2px}
.alarm .tool{width:59px;height:29px;padding-right:3px}
.alarmrow{display:flex;width:1857px;height:26px;margin-top:2px;border:1px solid #777;border-bottom:2px solid #999;background:linear-gradient(#ff0 22px,#fff 22px);font-size:19px;line-height:22px;white-space:nowrap;overflow:hidden}
.alarmrow span{padding-left:4.500px;border-right:1px solid #bbb;flex:none;overflow:hidden}
.alarmrow .fill{flex:1}

/* bottom tabs */
.tabs{height:40px;border-top:1px solid #000;border-bottom:2px solid #000;background:linear-gradient(#6a6a6a,#363636);display:flex;color:#fff}
.t{display:flex;align-items:center;justify-content:center;text-align:center;border-right:1px solid #000;box-shadow:inset 1px 1px #858585;line-height:18px;flex:none;white-space:nowrap}
.t.a{width:74px;font-size:17px;background:linear-gradient(#7a7a7a,#4a4a4a);padding-right:1px}
.gapcell{width:4px;border-right:1px solid #000}
.t.p{width:128px;font-size:15.600px;padding:0 16px}
.t.two{white-space:normal}
.t.on{background:linear-gradient(#333,#6a6a6a);box-shadow:inset 0 -1px #bbb}
.grow{flex:1;border-right:1px solid #000}
.t.i{width:59px}

/* tool window */
.win{position:absolute;left:1482px;top:46px;width:394px;height:356px;border:1px solid #999;background:#f0f0f0;box-shadow:2px 4px 9px rgba(0,0,0,.4);font-size:11px}
.wtitle{height:30px;background:#fff;display:flex;align-items:center;padding:0 0 2px 10px;gap:5px;font:12px "Open Sans","Noto Sans",sans-serif;color:#999}
.wbtn{margin-left:auto;margin-right:10px}
.wrow{display:flex;padding:12px 0 0 13px;height:41px}
.btn{width:73px;height:21px;border:1px solid #adadad;background:#e1e1e1;text-align:center;line-height:20px;margin-right:7px}
.pri{width:53px;background:#e5f1fb;border-color:#0078d7}
.inp{height:20px;background:#fff;border:1px solid #666;line-height:18px;padding-left:2px;overflow:hidden;white-space:nowrap}
.w1{width:144px;margin-right:6px}.w2{width:76px}
.tree{margin-left:12px;width:367px;height:220px;background:#fff;border:1px solid #828790;padding:1px 0 0 9px}
.tree li{height:16px;line-height:16px;padding-left:28px;position:relative;letter-spacing:-.05px}
.tree li::before{content:"+";position:absolute;left:0;top:4px;width:9px;height:9px;border:1px solid #999;font:9px/7px "Liberation Sans",sans-serif;text-align:center;color:#2b4b9b}
.tree li::after{content:"✓";position:absolute;left:13px;top:1px;width:13px;height:13px;border:1px solid #333;font:12px/12px "DejaVu Sans",sans-serif;text-align:center}
.wfoot{display:flex;padding:6px 0 0 11px}
.memo{width:301px;height:43px;border:1px solid #828790;background:#fff}
.opts{padding:1px 0 0 5px}
.opts div{display:flex;gap:6px;height:26px;line-height:14px}
.ck{width:13px;height:13px;border:1px solid #333;background:#fff;font:12px/11px "DejaVu Sans",sans-serif;text-align:center}
.ck.on::before{content:"✓"}
```
